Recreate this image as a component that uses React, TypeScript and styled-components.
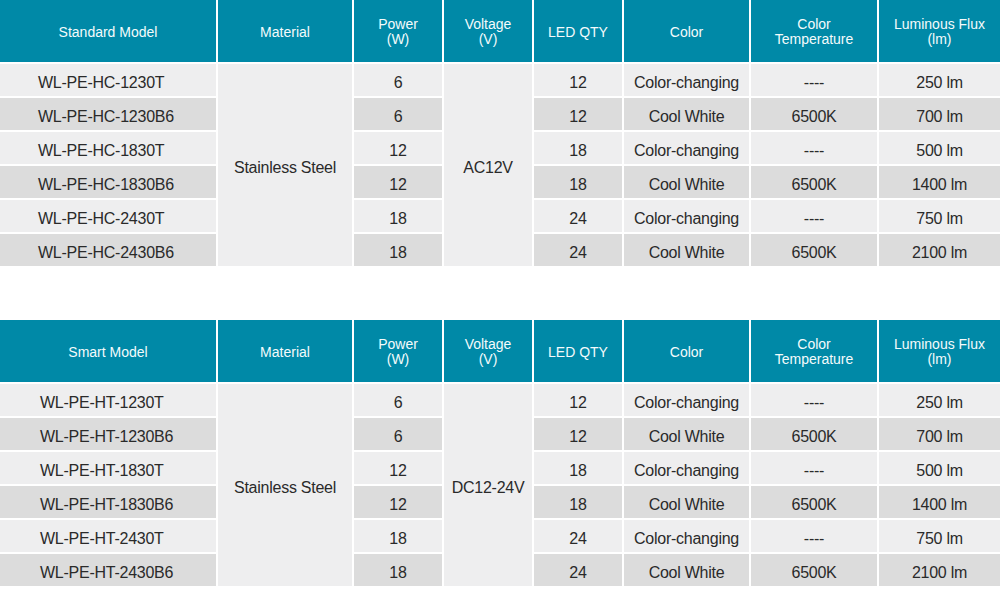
import React from "react";
import styled, { createGlobalStyle } from "styled-components";

const GlobalStyle = createGlobalStyle`
  html, body { margin: 0; padding: 0; background: #ffffff; }
  body { font-family: "Liberation Sans", Arial, sans-serif; }
`;

const Page = styled.div`
  width: 1000px;
  display: flex;
  flex-direction: column;
  gap: 54px;
`;

const Grid = styled.div`
  display: grid;
  grid-template-columns: 216px 134px 88px 88px 88px 125px 126px 121px;
  grid-template-rows: 62px repeat(6, 32px);
  gap: 2px;
  background: #ffffff;
`;

const HeadCell = styled.div`
  background: #0089a7;
  color: #f4fbfc;
  font-size: 14px;
  line-height: 15px;
  padding-top: 2px;
  display: flex;
  align-items: center;
  justify-content: center;
  text-align: center;
  white-space: pre-line;
`;

const Cell = styled.div<{ $dark?: boolean; $span?: number; $indent?: number }>`
  background: ${(p) => (p.$dark ? "#dcdcdc" : "#eeeeef")};
  color: #2a2a2a;
  font-size: 16px;
  letter-spacing: -0.25px;
  padding-top: 5px;
  display: flex;
  align-items: center;
  justify-content: ${(p) => (p.$indent ? "flex-start" : "center")};
  padding-left: ${(p) => (p.$indent ? `${p.$indent}px` : "0")};
  text-align: center;
  ${(p) => (p.$span ? `grid-row: span ${p.$span};` : "")}
`;

type Row = { model: string; power: string; led: string; color: string; temp: string; flux: string };

const makeRows = (prefix: string): Row[] => [
  { model: `${prefix}-1230T`, power: "6", led: "12", color: "Color-changing", temp: "----", flux: "250 lm" },
  { model: `${prefix}-1230B6`, power: "6", led: "12", color: "Cool White", temp: "6500K", flux: "700 lm" },
  { model: `${prefix}-1830T`, power: "12", led: "18", color: "Color-changing", temp: "----", flux: "500 lm" },
  { model: `${prefix}-1830B6`, power: "12", led: "18", color: "Cool White", temp: "6500K", flux: "1400 lm" },
  { model: `${prefix}-2430T`, power: "18", led: "24", color: "Color-changing", temp: "----", flux: "750 lm" },
  { model: `${prefix}-2430B6`, power: "18", led: "24", color: "Cool White", temp: "6500K", flux: "2100 lm" },
];

const SpecTable: React.FC<{ title: string; prefix: string; voltage: string; indent: number }> = ({
  title,
  prefix,
  voltage,
  indent,
}) => {
  const rows = makeRows(prefix);
  const heads = [title, "Material", "Power\n(W)", "Voltage\n(V)", "LED QTY", "Color", "Color\nTemperature", "Luminous Flux\n(lm)"];
  return (
    <Grid>
      {heads.map((h) => (
        <HeadCell key={h}>{h}</HeadCell>
      ))}
      {rows.map((r, i) => {
        const dark = i % 2 === 1;
        return (
          <React.Fragment key={r.model}>
            <Cell $dark={dark} $indent={indent}>{r.model}</Cell>
            {i === 0 && <Cell $span={6}>Stainless Steel</Cell>}
            <Cell $dark={dark}>{r.power}</Cell>
            {i === 0 && <Cell $span={6}>{voltage}</Cell>}
            <Cell $dark={dark}>{r.led}</Cell>
            <Cell $dark={dark}>{r.color}</Cell>
            <Cell $dark={dark}>{r.temp}</Cell>
            <Cell $dark={dark}>{r.flux}</Cell>
          </React.Fragment>
        );
      })}
    </Grid>
  );
};

export default function App() {
  return (
    <>
      <GlobalStyle />
      <Page>
        <SpecTable title="Standard Model" prefix="WL-PE-HC" voltage="AC12V" indent={38} />
        <SpecTable title="Smart Model" prefix="WL-PE-HT" voltage="DC12-24V" indent={40} />
      </Page>
    </>
  );
}
